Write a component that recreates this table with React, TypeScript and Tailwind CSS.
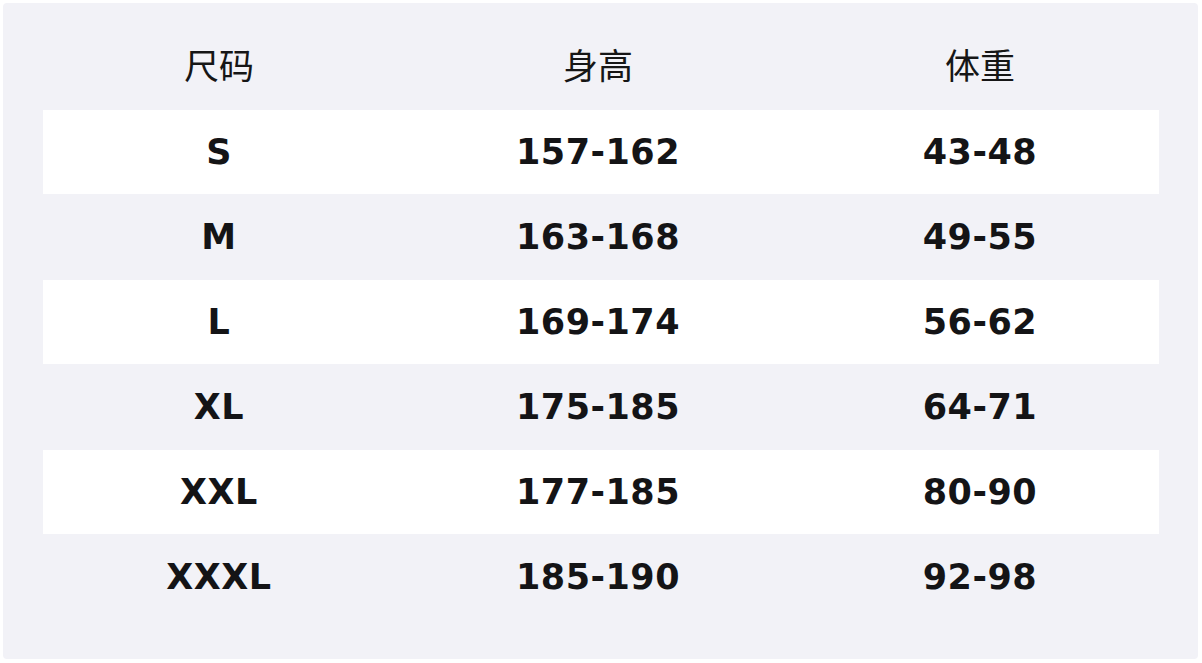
import React from 'react';

const rows = [
  { size: 'S', height: '157-162', weight: '43-48' },
  { size: 'M', height: '163-168', weight: '49-55' },
  { size: 'L', height: '169-174', weight: '56-62' },
  { size: 'XL', height: '175-185', weight: '64-71' },
  { size: 'XXL', height: '177-185', weight: '80-90' },
  { size: 'XXXL', height: '185-190', weight: '92-98' },
];

const App: React.FC = () => {
  return (
    <div className="w-[1202px] h-[663px] bg-white p-[3px]">
      <div className="w-[1195px] h-[656px] bg-[#f2f2f7] pl-[40px] pr-[39px] rounded-sm">
        {/* Header */}
        <div
          className="h-[107px] pt-[15px] flex items-center text-[35px] text-[#161616]"
          style={{ fontFamily: '"Noto Sans CJK SC", sans-serif' }}
        >
          <div className="w-[352px] text-center">尺码</div>
          <div className="w-[406px] text-center">身高</div>
          <div className="w-[358px] text-center">体重</div>
        </div>

        {/* Rows */}
        {rows.map((row, i) => (
          <div
            key={row.size}
            className={`flex items-center font-bold text-[35px] tracking-[0.5px] text-[#141416] ${
              i % 2 === 0 ? 'bg-white h-[84px]' : 'h-[86px]'
            }`}
            style={{ fontFamily: '"DejaVu Sans", sans-serif' }}
          >
            <div className="w-[352px] text-center">{row.size}</div>
            <div className="w-[406px] text-center">{row.height}</div>
            <div className="w-[358px] text-center">{row.weight}</div>
          </div>
        ))}
      </div>
    </div>
  );
};

export default App;
